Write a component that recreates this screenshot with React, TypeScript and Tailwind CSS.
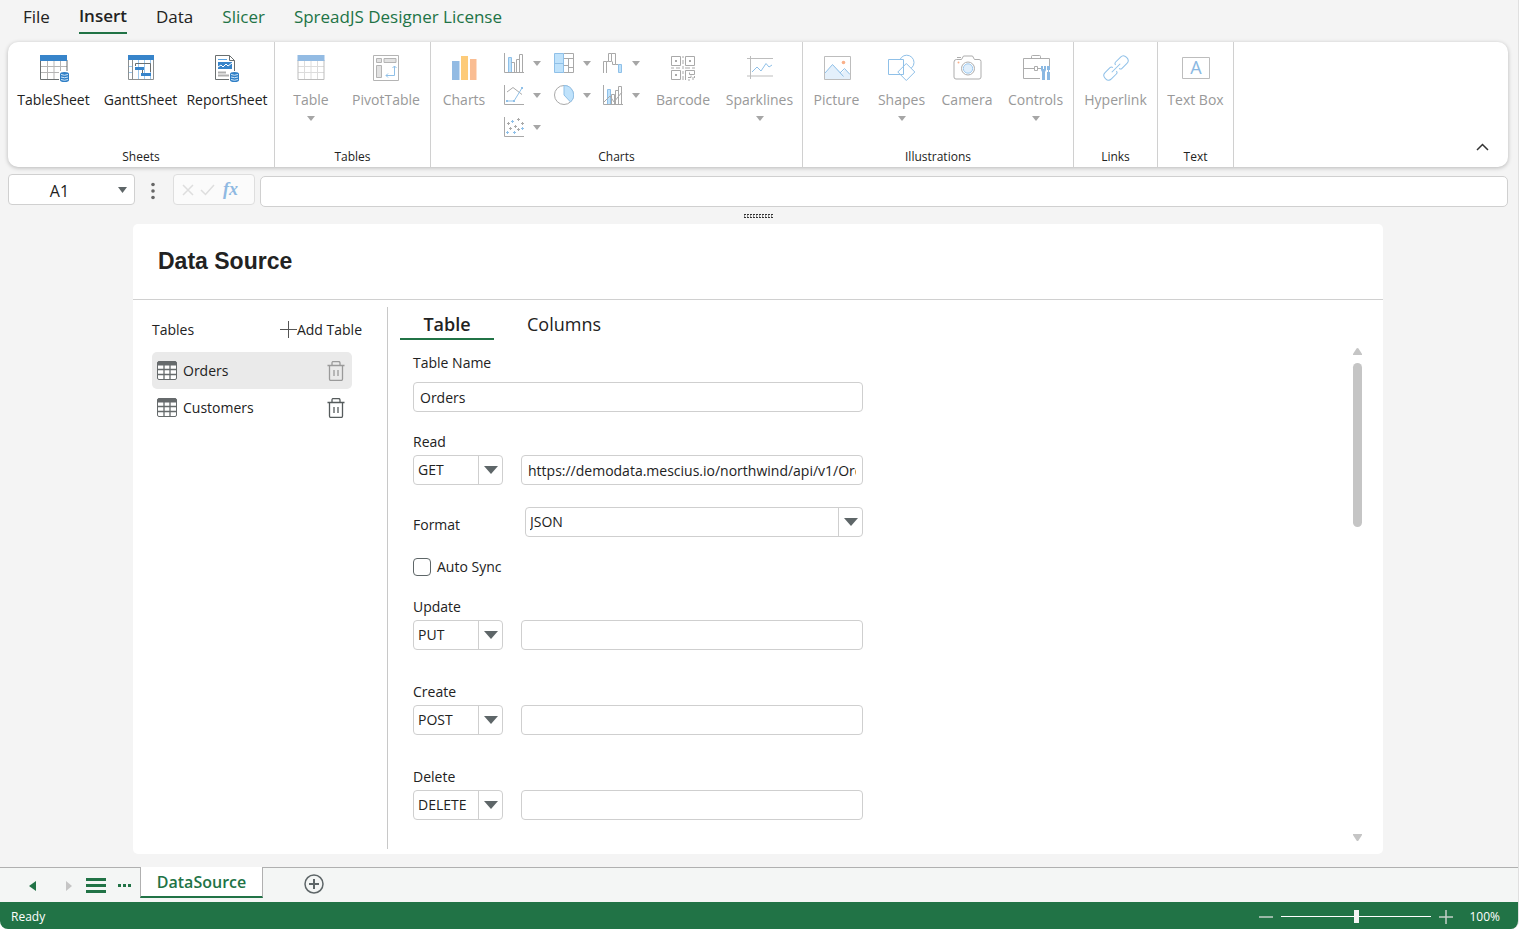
import React, { useState } from 'react';

const Db = ({ x }: { x: number }) => (
  <g transform={`translate(${x} 18)`}>
    <path d="M0 2 Q0 0 4.5 0 T9 2 V8 Q9 10 4.5 10 T0 8Z" fill="#2f7fc6" />
    <path d="M1 2.5 Q4.5 4 8 2.5 M1 5 Q4.5 6.5 8 5 M1 7.5 Q4.5 9 8 7.5" stroke="#cfe6fa" fill="none" />
  </g>
);

const Icon = ({ children }: { children: React.ReactNode }) => (
  <svg width="30" height="28" viewBox="0 0 30 28" fill="none" aria-hidden="true">
    {children}
  </svg>
);

const Mini = ({ children }: { children: React.ReactNode }) => (
  <svg width="20" height="20" viewBox="0 0 20 20" fill="none" stroke="#a9a9a9" aria-hidden="true">
    {children}
  </svg>
);

const icons = {
  tableSheet: (
    <Icon>
      <path d="M8.5 6v19M15 6v19M21.5 6v19M2 12.5h26M2 18.5h26" stroke="#b5b5b5" />
      <path d="M1.5 6v19.5h26.5V6" stroke="#6a6f70" />
      <path d="M1 1h27v6H1z" fill="#3784ca" />
      <path d="M20 17h10v11H20z" fill="#fff" />
      <Db x={21} />
    </Icon>
  ),
  ganttSheet: (
    <Icon>
      <path d="M12.500 6v19M18.500 6v19M24.500 6v19M2 12.500h4M2 18.500h4" stroke="#9cc8ee" />
      <path d="M2.500 6v19.500h25V6M6.500 6v19" stroke="#8b8f90" />
      <path d="M9.500 12V9.500h15V18M16.500 16v3" stroke="#6a6f70" />
      <path d="M2 1h26v5H2zM9 13h9v3H9zM15 19h10v3H15z" fill="#3784ca" />
    </Icon>
  ),
  reportSheet: (
    <Icon>
      <path d="M3.500 1.500h14l5 5V25.500h-19z" stroke="#6a6f70" fill="#fff" />
      <path d="M17.500 1.500v5h5" stroke="#6a6f70" />
      <path d="M6 5.500h9" stroke="#5aa2e0" />
      <path d="M6 8h14v7H6z" fill="#3784ca" />
      <path d="M6 13l3-2 2 2 3-3 2 2 4-3" stroke="#fff" />
      <path d="M6 18.500h8M6 21.500h11" stroke="#b0b0b0" strokeWidth="2" />
      <path d="M17 17h11v11H17z" fill="#fff" />
      <Db x={18} />
    </Icon>
  ),
  table: (
    <Icon>
      <path d="M8.500 6v19M15 6v19M21.500 6v19M2 12.500h26M2 18.500h26" stroke="#dcdcdc" />
      <path d="M2 6v19.500h26V6" stroke="#bdbdbd" />
      <path d="M1.500 1h27v6h-27z" fill="#93bbe3" />
    </Icon>
  ),
  pivot: (
    <Icon>
      <path d="M2.500 1.500h25v25h-25z" stroke="#b4b4b4" />
      <path d="M5.500 4.500h5v4h-5zM13 4.500h12v4H13zM5.500 11.500h5v12h-5z" fill="#e2e2e2" stroke="#b4b4b4" />
      <path d="M23.500 12v9.500H15M21.500 14l2-2 2 2M17 19.500l-2 2 2 2" stroke="#8fc0e8" />
    </Icon>
  ),
  charts: (
    <Icon>
      <path d="M3 7h7.500v19H3z" fill="#93bbe3" />
      <path d="M12 2h7v24h-7z" fill="#fdcb79" />
      <path d="M21 5h6.500v21H21z" fill="#fabd92" />
    </Icon>
  ),
  barcode: (
    <Icon>
      <g stroke="#a9a9a9">
        <path d="M3.500 2.500h9v9h-9zM17.500 2.500h9v9h-9zM3.500 16.500h9v9h-9z" />
        <path d="M15 2v2M15 6v4M15 12v3M15 17v3M15 22v4M3 14h3M8 14h4M17 14h5M24 14h3M17.500 26V16.500h9v4h-5v-2M20 23.500h3v-2M20 26h2M25 23v3M26.500 22v2" />
      </g>
      <path d="M7 6h2v2H7zM21 6h2v2h-2zM7 20h2v2H7z" fill="#a9a9a9" />
    </Icon>
  ),
  sparklines: (
    <Icon>
      <path d="M2 4.500h26M2 22h26M5.500 2v23" stroke="#bdbdbd" />
      <path d="M7 18l5-5 4 4 5-7.500 3 3.500 3-2" stroke="#8fc0e8" />
    </Icon>
  ),
  picture: (
    <Icon>
      <path d="M3 19l7.500-8.500L20 19l3-4 5 5v5H3z" fill="#e4f0fb" />
      <path d="M3 19l7.500-8.500 11 12M18 19l4.500-4.500 5.500 6" stroke="#8fc0e8" />
      <path d="M2.500 2.500h26v23h-26z" stroke="#bdbdbd" />
      <circle cx="21.500" cy="8.500" r="1.800" fill="#fab089" />
    </Icon>
  ),
  shapes: (
    <Icon>
      <g fill="#fff" stroke="#8fc0e8">
        <circle cx="19.700" cy="8.500" r="7.300" />
        <path d="M1.500 5.500h15v15h-15zM19.300 9.500l8.500 8.500-8.500 8.500-8.500-8.500z" />
      </g>
    </Icon>
  ),
  camera: (
    <Icon>
      <path d="M4.500 5.500h5l2-3.500h9l2 3.500H27a2 2 0 0 1 2 2V23a2 2 0 0 1-2 2H4a2 2 0 0 1-2-2V8q0-2.500 2.500-2.500z" stroke="#adadad" />
      <path d="M5 3.500h4" stroke="#adadad" />
      <circle cx="16" cy="14.500" r="6.500" stroke="#adadad" />
      <circle cx="16" cy="14.500" r="4.700" fill="#e0effc" stroke="#9cc8ee" />
      <circle cx="6.500" cy="8.500" r="1" fill="#fab089" />
    </Icon>
  ),
  controls: (
    <Icon>
      <path d="M19 24.500H2.500v-20h26v8M10.500 4.500v-2q0-1 1-1h7q1 0 1 1v2M2.500 14.500H13M17 14.500h3" stroke="#adadad" />
      <path d="M13.500 12.500h3v4h-3z" stroke="#adadad" />
      <path d="M20 12h2v3h1v-3h2v4l-1 2v8h-3v-8l-1-2zM26 12h3v4h-1v2h1v8h-3v-8h1v-2h-1z" fill="#8ab8e2" />
    </Icon>
  ),
  hyperlink: (
    <Icon>
      <g transform="rotate(-45 15 14)" stroke="#8fc0e8">
        <path d="M13 16.500q0 2-2 2H4q-4 0-4-4.500t4-4.500h7q2 0 2 2" />
        <path d="M17 11.500q0-2 2-2h7q4 0 4 4.500t-4 4.500h-7q-2 0-2-2" />
        <path d="M9 14h12" />
      </g>
    </Icon>
  ),
  textBox: (
    <Icon>
      <path d="M1.500 3.500h27v21h-27z" stroke="#bdbdbd" />
      <text x="15" y="20" textAnchor="middle" fontSize="18" fontFamily="Open Sans" fill="#8ab8e2">
        A
      </text>
    </Icon>
  ),
};

const miniCharts = [
  {
    name: 'Column chart',
    icon: (
      <Mini>
        <path d="M4.500 19V4.500h3V19" fill="#bfe2fb" stroke="#8fc0e8" />
        <path d="M7.500 9.500h3V19M12.500 19V6.500h3M15.500 19V1.500h3V19" />
        <path d="M.5 0v19.500H20" />
      </Mini>
    ),
  },
  {
    name: 'Hierarchy chart',
    icon: (
      <Mini>
        <path d="M9.500.5h10v19h-10M9.500 5.500h10M14.500 5.500v14M9.500 12.500h5M14.500 14.500h5" />
        <path d="M.5.5h9v19h-9z" fill="#bfe2fb" stroke="#8fc0e8" />
        <path d="M.5 10.500h9" stroke="#8fc0e8" />
      </Mini>
    ),
  },
  {
    name: 'Waterfall chart',
    icon: (
      <Mini>
        <path d="M.5 20v-11.500h3V20M3.500 8.500h2v-8h3v8h-3M8.500.5h4v11h3M9.500 8.500v3h3" />
        <path d="M15.500 11.500h3v8h-3z" fill="#bfe2fb" stroke="#8fc0e8" />
      </Mini>
    ),
  },
  {
    name: 'Line chart',
    icon: (
      <Mini>
        <path d="M3 7l6-4.500 9 7" />
        <path d="M3 16h7L18 3" stroke="#8fc0e8" />
        <path d="M2 15h2v2H2zM9 15h2v2H9zM17 2h2v2h-2z" fill="#8fc0e8" stroke="none" />
        <path d="M.5 0v19.500H20" />
      </Mini>
    ),
  },
  {
    name: 'Pie chart',
    icon: (
      <Mini>
        <circle cx="10" cy="10" r="9.500" />
        <path d="M10 .5V10l6.500 7A9.500 9.500 0 0 0 10 .5z" fill="#bfe2fb" stroke="#8fc0e8" />
      </Mini>
    ),
  },
  {
    name: 'Combo chart',
    icon: (
      <Mini>
        <path d="M4.500 19V4.500h3V19" fill="#bfe2fb" stroke="#8fc0e8" />
        <path d="M8.500 19V9.500h3V19M12.500 19V5.500h3V19M15.500 19V1.500h3V19M1 17l6-6 4 6 8-10" />
        <path d="M.5 0v19.500H20" />
      </Mini>
    ),
  },
  {
    name: 'Scatter chart',
    icon: (
      <Mini>
        <path d="M4.500 5v3M3 6.500h3M14.500 1v3M13 2.500h3M18.500 5v3M17 6.500h3M6.500 10v3M5 11.500h3M11.500 8v3M10 9.500h3M14.500 11v3M13 12.500h3" />
        <path d="M8.500 3v3M7 4.500h3M3.500 14v3M2 15.500h3M10.500 14v3M9 15.500h3M18.500 10v3M17 11.500h3" stroke="#8fc0e8" />
        <path d="M.5 0v19.500H20" />
      </Mini>
    ),
  },
];

const SmallArrow = () => (
  <svg width="8" height="5" viewBox="0 0 8 5" aria-hidden="true">
    <path d="M0 0h8L4 5z" fill="#a6a6a6" />
  </svg>
);

interface RibbonButtonProps {
  icon: React.ReactNode;
  label: string;
  width: string;
  arrow?: boolean;
  enabled?: boolean;
}

const RibbonButton = ({ icon, label, width, arrow, enabled }: RibbonButtonProps) => (
  <button
    disabled={!enabled}
    className={`${width} flex shrink-0 flex-col items-center text-sm leading-5 whitespace-nowrap text-[#222] disabled:text-[#999]`}
  >
    {icon}
    <span className="mt-2 mb-1.5">{label}</span>
    {arrow && <SmallArrow />}
  </button>
);

const Group = ({ title, children }: { title: string; children: React.ReactNode }) => (
  <section className="flex shrink-0 flex-col justify-between border-r border-[#d0d0d0] pt-3 pb-0.5" aria-label={title}>
    <div className="flex items-start">{children}</div>
    <div className="text-center text-xs leading-4 text-[#222]">{title}</div>
  </section>
);

const Ribbon = () => (
  <div className="mr-[10px] ml-2 flex h-[125px] rounded-[10px] bg-white shadow-[0_1px_4px_rgba(0,0,0,0.25)]">
    <Group title="Sheets">
      <div className="flex pr-1 pl-0.5">
        <RibbonButton icon={icons.tableSheet} label="TableSheet" width="w-[87px]" enabled />
        <RibbonButton icon={icons.ganttSheet} label="GanttSheet" width="w-[87px]" enabled />
        <RibbonButton icon={icons.reportSheet} label="ReportSheet" width="w-[86px]" enabled />
      </div>
    </Group>
    <Group title="Tables">
      <div className="flex pr-px pl-1">
        <RibbonButton icon={icons.table} label="Table" width="w-16" arrow />
        <RibbonButton icon={icons.pivot} label="PivotTable" width="w-[86px]" />
      </div>
    </Group>
    <Group title="Charts">
      <RibbonButton icon={icons.charts} label="Charts" width="w-[66px]" />
      <div className="-mt-[7px] mr-1 ml-[7px] grid grid-cols-[50px_49px_42px]">
        {miniCharts.map((c) => (
          <button key={c.name} disabled aria-label={c.name} className="flex h-8 items-center gap-[9px]">
            {c.icon}
            <SmallArrow />
          </button>
        ))}
      </div>
      <RibbonButton icon={icons.barcode} label="Barcode" width="w-[68px]" />
      <RibbonButton icon={icons.sparklines} label="Sparklines" width="w-[85px]" arrow />
    </Group>
    <Group title="Illustrations">
      <div className="flex pr-[3px]">
        <RibbonButton icon={icons.picture} label="Picture" width="w-[67px]" />
        <RibbonButton icon={icons.shapes} label="Shapes" width="w-[63px]" arrow />
        <RibbonButton icon={icons.camera} label="Camera" width="w-[68px]" />
        <RibbonButton icon={icons.controls} label="Controls" width="w-[69px]" arrow />
      </div>
    </Group>
    <Group title="Links">
      <RibbonButton icon={icons.hyperlink} label="Hyperlink" width="w-[83px]" />
    </Group>
    <Group title="Text">
      <RibbonButton icon={icons.textBox} label="Text Box" width="w-[75px]" />
    </Group>
    <div className="flex flex-1 items-end justify-end pr-[19px] pb-4">
      <button aria-label="Collapse ribbon">
        <svg width="13" height="8" viewBox="0 0 13 8" fill="none" stroke="#333" strokeWidth="1.500">
          <path d="M1 7l5.500-5.500L12 7" />
        </svg>
      </button>
    </div>
  </div>
);

const FormulaBar = () => (
  <div className="mt-[7px] mr-[10px] ml-2 flex items-start">
    <div className="flex h-[31px] w-[127px] items-center rounded border border-[#d0d0d0] bg-white pr-[7px]">
      <input aria-label="Name box" defaultValue="A1" className="w-[101px] pt-0.5 text-center text-base leading-5 outline-none" />
      <button aria-label="Open name list" className="ml-auto">
        <svg width="9" height="6" viewBox="0 0 9 6">
          <path d="M0 0h9L4.500 6z" fill="#5e6668" />
        </svg>
      </button>
    </div>
    <svg className="mx-4" width="6" height="31" viewBox="0 0 6 31" fill="#666" aria-hidden="true">
      <circle cx="2" cy="10.500" r="1.800" />
      <circle cx="2" cy="17" r="1.800" />
      <circle cx="2" cy="23.500" r="1.800" />
    </svg>
    <div className="flex h-[31px] w-[82px] items-center gap-1.5 rounded border border-[#dedede] bg-[#fbfbfb] pl-2">
      <button disabled aria-label="Cancel">
        <svg width="12" height="12" viewBox="0 0 12 12" stroke="#dedede" strokeWidth="1.500">
          <path d="M1 1l10 10M11 1L1 11" />
        </svg>
      </button>
      <button disabled aria-label="Enter">
        <svg width="15" height="12" viewBox="0 0 15 12" fill="none" stroke="#dedede" strokeWidth="1.500">
          <path d="M1 6l4.500 4.500L14 1" />
        </svg>
      </button>
      <button disabled className="pb-0.5 pl-0.5 font-['Liberation_Serif',serif] text-lg leading-5 font-bold text-[#8fb9e2] italic">
        fx
      </button>
    </div>
    <input
      aria-label="Formula"
      className="mt-0.5 ml-[5px] h-[31px] min-w-0 flex-1 rounded-[5px] border border-[#d0d0d0] bg-white px-2 outline-none"
    />
  </div>
);

const TableIcon = () => (
  <svg width="20" height="19" viewBox="0 0 20 19" fill="none" stroke="#666b6c" aria-hidden="true">
    <rect x=".5" y=".5" width="19" height="18" rx="1.500" fill="#fff" />
    <path d="M7 4v14.500M13 4v14.500M.5 8.500h19M.5 13.500h19" strokeWidth="1.300" />
    <path d="M1 1h18v3H1z" fill="#666b6c" />
  </svg>
);

const TrashIcon = () => (
  <svg width="18" height="20" viewBox="0 0 18 20" fill="none" stroke="currentColor" aria-hidden="true">
    <path d="M.5 4.500h17M5 4V2q0-1.500 1.500-1.500h5Q13 .5 13 2v2M2.500 4.500V18q0 1.500 1.500 1.500h10q1.500 0 1.500-1.500V4.500" strokeWidth="1.300" />
    <path d="M7 9v6M11 9v6" strokeWidth="1.300" />
  </svg>
);

const Sidebar = () => {
  const [active, setActive] = useState('Orders');
  return (
    <aside className="w-[255px] shrink-0 border-r border-[#c8c8c8] pr-[25px] pl-[19px]">
      <div className="flex h-[45px] items-center justify-between text-sm leading-5">
        <span>Tables</span>
        <button className="flex items-center">
          <svg width="17" height="17" viewBox="0 0 17 17" stroke="#555" aria-hidden="true">
            <path d="M8.500 0v17M0 8.500h17" />
          </svg>
          Add Table
        </button>
      </div>
      <ul className="w-[200px]">
        {['Orders', 'Customers'].map((name) => (
          <li
            key={name}
            className={`flex h-[37px] items-center justify-between rounded-[5px] pr-[7px] pl-[5px] ${active === name ? 'bg-[#eaeaea] text-[#9a9a9a]' : 'text-[#555b5c]'}`}
          >
            <button onClick={() => setActive(name)} className="flex items-center gap-1.5 text-sm leading-5 text-[#222]">
              <TableIcon />
              {name}
            </button>
            <button aria-label={`Delete ${name}`}>
              <TrashIcon />
            </button>
          </li>
        ))}
      </ul>
    </aside>
  );
};

const Select = ({ id, value, options, label }: { id: string; value: string; options: string[]; label?: string }) => (
  <div className="relative h-[30px] w-full">
    <select
      id={id}
      aria-label={label}
      defaultValue={value}
      className="h-[30px] w-full appearance-none rounded border border-[#cfcfcf] bg-white pr-6 pl-1 text-sm leading-5 outline-none"
    >
      {options.map((o) => (
        <option key={o}>{o}</option>
      ))}
    </select>
    <span className="pointer-events-none absolute inset-y-px right-px flex w-6 items-center justify-center border-l border-[#cfcfcf]">
      <svg width="14" height="8" viewBox="0 0 14 8" aria-hidden="true">
        <path d="M0 0h14L7 8z" fill="#5e6668" />
      </svg>
    </span>
  </div>
);

const inputClass = 'h-[30px] w-full min-w-0 rounded border border-[#cfcfcf] bg-white px-1.5 text-sm leading-5 outline-none';
const methods = ['GET', 'POST', 'PUT', 'DELETE'];

const RequestField = ({ title, method, url }: { title: string; method: string; url?: string }) => (
  <div>
    <label htmlFor={title} className="block leading-5">
      {title}
    </label>
    <div className="mt-[3px] grid grid-cols-[90px_1fr] gap-[18px]">
      <Select id={`${title}-method`} label={`${title} method`} value={method} options={methods} />
      <input id={title} defaultValue={url} className={inputClass} />
    </div>
  </div>
);

const TableForm = () => (
  <form className="w-[450px] text-sm">
    <label htmlFor="table-name" className="block leading-5">
      Table Name
    </label>
    <input id="table-name" defaultValue="Orders" className={`${inputClass} mt-[9px] mb-5`} />
    <RequestField title="Read" method="GET" url="https://demodata.mescius.io/northwind/api/v1/Orders" />
    <div className="mt-[22px] mb-5 grid grid-cols-[112px_1fr] items-center">
      <label htmlFor="format" className="pt-1.5 leading-5">
        Format
      </label>
      <Select id="format" value="JSON" options={['JSON', 'CSV', 'XML']} />
    </div>
    <label className="mb-5 flex items-center gap-1.5 leading-5">
      <input type="checkbox" className="size-[18px] appearance-none rounded border border-[#5e6668] bg-white checked:bg-[#217346]" />
      Auto Sync
    </label>
    <div className="flex flex-col gap-8">
      <RequestField title="Update" method="PUT" />
      <RequestField title="Create" method="POST" />
      <RequestField title="Delete" method="DELETE" />
    </div>
  </form>
);

const ScrollBar = () => (
  <div className="flex w-[9px] flex-col justify-between pt-[41px] pb-2" aria-hidden="true">
    <div className="flex flex-col gap-2">
      <svg width="9" height="7" viewBox="0 0 9 7">
        <path d="M3.500.5Q4.500-.5 5.500.5L9 6v1H0V6z" fill="#c5c5c5" />
      </svg>
      <div className="h-[164px] rounded-full bg-[#c5c5c5]" />
    </div>
    <svg width="9" height="7" viewBox="0 0 9 7">
      <path d="M0 0h9v1L5.500 6.500Q4.500 7.500 3.500 6.500L0 1z" fill="#c5c5c5" />
    </svg>
  </div>
);

const DataSourcePanel = () => (
  <main className="mr-[135px] ml-[133px] flex flex-1 flex-col rounded-[5px] bg-white">
    <h1 className="border-b border-[#d0d0d0] px-[25px] pt-[21px] pb-[22px] font-['Liberation_Sans',sans-serif] text-[23px] leading-8 font-bold">
      Data Source
    </h1>
    <div className="mt-[7px] mb-[5px] flex flex-1">
      <Sidebar />
      <div className="flex flex-1 justify-between pr-[21px] pl-3">
        <div>
          <div role="tablist" className="mb-[13px] flex gap-2 text-lg leading-8">
            <button role="tab" aria-selected="true" className="h-[33px] w-[94px] border-b-2 border-[#217346] pt-px text-center font-semibold">
              Table
            </button>
            <button role="tab" aria-selected="false" className="h-[33px] px-[25px]">
              Columns
            </button>
          </div>
          <div className="pl-[13px]">
            <TableForm />
          </div>
        </div>
        <ScrollBar />
      </div>
    </div>
  </main>
);

const SheetTabs = () => (
  <div className="mt-[13px] flex h-[35px] items-start border-t border-[#b0b0b0] bg-[#f4f6f5]">
    <div className="flex h-[35px] w-[140px] items-center pl-[29px]">
      <button aria-label="Previous sheet">
        <svg width="7" height="10" viewBox="0 0 7 10">
          <path d="M7 0v10L0 5z" fill="#217346" />
        </svg>
      </button>
      <button aria-label="Next sheet" disabled className="ml-[30px]">
        <svg width="6" height="10" viewBox="0 0 6 10">
          <path d="M0 0v10l6-5z" fill="#c5c5c5" />
        </svg>
      </button>
      <button aria-label="All sheets" className="ml-3.5">
        <svg width="20" height="15" viewBox="0 0 20 15" fill="#217346">
          <path d="M0 0h20v3H0zM0 6h20v3H0zM0 12h20v3H0z" />
        </svg>
      </button>
      <button aria-label="More sheets" className="ml-3">
        <svg width="13" height="3" viewBox="0 0 13 3" fill="#217346">
          <path d="M0 0h3v3H0zM5 0h3v3H5zM10 0h3v3h-3z" />
        </svg>
      </button>
    </div>
    <button className="-mt-px h-[31px] w-[123px] border-x border-b-2 border-x-[#b0b0b0] border-b-[#217346] bg-white text-base leading-7 font-semibold text-[#217346]">
      DataSource
    </button>
    <button aria-label="Add sheet" className="mt-1.5 ml-[41px]">
      <svg width="20" height="20" viewBox="0 0 20 20" fill="none" stroke="#5e6668">
        <circle cx="10" cy="10" r="9" strokeWidth="1.500" />
        <path d="M10 5v10M5 10h10" strokeWidth="2" />
      </svg>
    </button>
  </div>
);

const StatusBar = () => (
  <footer className="flex h-[27px] items-center justify-between bg-[#217346] pt-0.5 pr-[18px] pl-[11px] text-xs leading-4 text-white">
    <span>Ready</span>
    <div className="flex items-center">
      <button aria-label="Zoom out">
        <svg width="14" height="14" viewBox="0 0 14 14" stroke="#c3cfc8" strokeWidth="1.500">
          <path d="M0 7h14" />
        </svg>
      </button>
      <input
        type="range"
        aria-label="Zoom"
        min="0"
        max="100"
        defaultValue="50"
        className="mx-2 h-px w-[150px] appearance-none bg-white [&::-webkit-slider-thumb]:h-[13px] [&::-webkit-slider-thumb]:w-[5px] [&::-webkit-slider-thumb]:appearance-none [&::-webkit-slider-thumb]:bg-[#f4f4f4]"
      />
      <button aria-label="Zoom in">
        <svg width="14" height="14" viewBox="0 0 14 14" stroke="#c3cfc8" strokeWidth="1.500">
          <path d="M0 7h14M7 0v14" />
        </svg>
      </button>
      <span className="ml-4">100%</span>
    </div>
  </footer>
);

const menu = [
  { name: 'File', style: 'text-[#222]' },
  { name: 'Insert', style: 'text-[#222] font-semibold border-b-2 border-[#217346]' },
  { name: 'Data', style: 'text-[#222]' },
  { name: 'Slicer', style: 'text-[#217346]' },
  { name: 'SpreadJS Designer License', style: 'text-[#217346]' },
];

export default function App() {
  return (
    <div className="flex min-h-screen flex-col overflow-hidden rounded-b-lg border-r border-[#e0e0e0] bg-[#f4f4f4] font-['Open_Sans',sans-serif] text-[#222]">
      <nav className="flex h-[42px] items-start gap-[29px] pl-[23px]">
        {menu.map((m) => (
          <button key={m.name} className={`h-[34px] text-[17px] leading-8 ${m.style}`}>
            {m.name}
          </button>
        ))}
      </nav>
      <Ribbon />
      <FormulaBar />
      <div className="flex h-[17px] items-center justify-center pt-px">
        <svg width="30" height="4" viewBox="0 0 30 4" stroke="#333" strokeDasharray="2 1" aria-hidden="true">
          <path d="M0 .5h30M0 3.500h30" />
          <path d="M0 2h30" strokeDasharray="1 2" />
        </svg>
      </div>
      <DataSourcePanel />
      <SheetTabs />
      <StatusBar />
    </div>
  );
}
